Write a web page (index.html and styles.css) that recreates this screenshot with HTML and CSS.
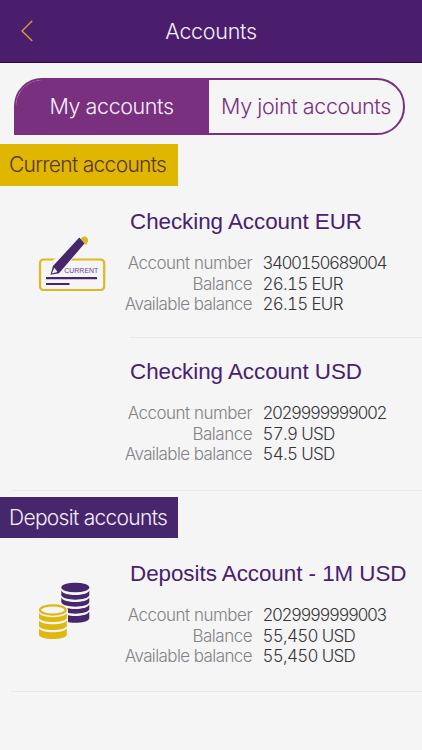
FILE: index.html
```html
<!DOCTYPE html>
<html lang="en">
<head>
<meta charset="utf-8">
<title>Accounts</title>
<link rel="stylesheet" href="styles.css">
</head>
<body>
<header class="bar">
  <svg class="back" viewBox="0 0 14 24" width="14" height="24"><path d="M12.3 1.8 2 12l10.3 10"/></svg>
  <h1 class="heading">Accounts</h1>
</header>
<nav class="tabs">
  <a class="tab active">My accounts</a>
  <a class="tab">My joint accounts</a>
</nav>
<section class="group">
  <h2 class="band gold">Current accounts</h2>
  <article class="account">
    <svg class="icon" viewBox="30 228 84 70" width="84" height="70">
      <rect x="40" y="259.5" width="64.2" height="30.5" rx="3.5" fill="none" stroke="#dfb722" stroke-width="2.2"/>
      <path d="M49 264 58 256h17l-9 10-14 12z" fill="#f5f5f5"/>
      <path d="M80.500 239.500q1.500-3.500 4.500-3 3.500 1 3 5l-2 3.500z" fill="#dfb722"/>
      <path d="M79.300 237.500 84.500 243.500 59 273.300 50.500 274.700 53 266z" fill="#46266c"/>
      <path d="m54.300 267.700 3.200 4.200-5.600 1.500z" fill="#f5f5f5"/>
      <path d="M46 278.200h51M46 284h23.500" stroke="#46266c" stroke-width="2.200"/>
      <text class="cheque" x="64.300" y="273.400" textLength="34" lengthAdjust="spacingAndGlyphs">CURRENT</text>
    </svg>
    <div class="info">
      <h3 class="name">Checking Account EUR</h3>
      <dl class="facts">
        <dt>Account number</dt><dd class="number">3400150689004</dd>
        <dt>Balance</dt><dd>26.15 EUR</dd>
        <dt class="tight">Available balance</dt><dd>26.15 EUR</dd>
      </dl>
    </div>
  </article>
  <article class="account last">
    <div class="info ruled">
      <h3 class="name">Checking Account USD</h3>
      <dl class="facts">
        <dt>Account number</dt><dd class="number">2029999999002</dd>
        <dt>Balance</dt><dd>57.9 USD</dd>
        <dt class="tight">Available balance</dt><dd>54.5 USD</dd>
      </dl>
    </div>
  </article>
</section>
<section class="group second">
  <h2 class="band purple">Deposit accounts</h2>
  <article class="account last">
    <svg class="icon" viewBox="30 575 84 70" width="84" height="70">
      <g fill="#46266c">
        <ellipse cx="75.300" cy="587.500" rx="14" ry="4.800"/>
        <path d="M61.300 590.500c2 6 26 6 28 0v4.800c-2 5.800-26 5.800-28 0z"/>
        <path d="M61.300 597.500c2 6 26 6 28 0v4.800c-2 5.800-26 5.800-28 0z"/>
        <path d="M61.300 604.500c2 6 26 6 28 0v4.800c-2 5.800-26 5.800-28 0z"/>
        <path d="M61.300 611.500c2 6 26 6 28 0v7c-2 5.800-26 5.800-28 0z"/>
      </g>
      <path d="M37.500 610c0-8 30.500-8 30.500 0v29h-30.500z" fill="#f5f5f5"/>
      <ellipse cx="52.900" cy="610" rx="12.900" ry="4.600" fill="none" stroke="#dfb70e" stroke-width="2.200"/>
      <g fill="#dfb70e">
        <path d="M39 612.800c2 5.800 25.800 5.800 27.800 0v5.200c-2 5.400-25.800 5.400-27.800 0z"/>
        <path d="M39 620.300c2 5.400 25.800 5.400 27.800 0v5.600c-2 5.400-25.800 5.400-27.800 0z"/>
        <path d="M39 628.200c2 5.400 25.800 5.400 27.800 0v6.800c-2 5.400-25.800 5.400-27.800 0z"/>
      </g>
    </svg>
    <div class="info">
      <h3 class="name">Deposits Account - 1M USD</h3>
      <dl class="facts">
        <dt>Account number</dt><dd class="number">2029999999003</dd>
        <dt>Balance</dt><dd>55,450 USD</dd>
        <dt class="tight">Available balance</dt><dd>55,450 USD</dd>
      </dl>
    </div>
  </article>
</section>
</body>
</html>
```

FILE: styles.css
```css
* { box-sizing: border-box; margin: 0; padding: 0; }
html, body { height: 750px; overflow: hidden; }
body {
  background: #f5f5f5;
  font-family: Inter, "Liberation Sans", sans-serif;
  font-weight: 300;
}
.bar {
  display: grid;
  grid-template-columns: 60px 1fr 60px;
  align-items: center;
  height: 63px;
  background: #4b1e6d;
  border-bottom: 1px solid #220a45;
}
.back { margin-left: 20px; fill: none; stroke: #dba52c; stroke-width: 1.3; }
.heading {
  font-size: 21.5px;
  font-weight: 300;
  color: #f7effb;
  text-align: center;
  letter-spacing: -0.3px;
}
.tabs {
  display: flex;
  width: 391px;
  height: 57px;
  margin: 15px 0 0 14px;
  border: 2px solid #78307f;
  border-radius: 28px 28px 28px 0;
  overflow: hidden;
}
.tab {
  flex: 1;
  display: flex;
  align-items: center;
  justify-content: center;
  padding-bottom: 1px;
  font-size: 21.5px;
  letter-spacing: -0.4px;
  white-space: nowrap;
  color: #78307f;
}
.tab.active { flex: 0 0 193px; padding-right: 2px; background: #78307f; color: #fbeffc; }
.group { margin-top: 9px; }
.group.second { margin-top: 6px; }
.band {
  width: 178px;
  height: 42px;
  padding-left: 9px;
  font-size: 21px;
  font-weight: 300;
  line-height: 42px;
  letter-spacing: -0.7px;
  white-space: nowrap;
}
.gold { background: #dfb700; color: #5c3434; }
.purple { height: 41px; background: #46266c; color: #f5effa; }
.account {
  display: grid;
  grid-template-columns: 84px 1fr;
  align-items: start;
  height: 151px;
  margin-left: 11px;
  padding: 23px 0 0 19px;
}
.last { height: 154px; border-bottom: 1px solid #e9e9ea; }
.icon { margin-top: 19px; }
.second .icon { margin-top: 14px; }
.info { grid-column: 2; margin-left: 16px; }
.account:has(.ruled) { padding-top: 0; }
.ruled { border-top: 1px solid #e9e9ea; padding-top: 21px; }
.name {
  font-family: "Liberation Sans", sans-serif;
  font-size: 22.400px;
  font-weight: 400;
  line-height: 26px;
  letter-spacing: -0.04px;
  color: #482070;
  white-space: nowrap;
}
.facts {
  display: grid;
  grid-template-columns: 128px 1fr;
  column-gap: 10.500px;
  margin: 18px 0 0 -6px;
  font-size: 17px;
  line-height: 20.700px;
  white-space: nowrap;
}
.facts dt { text-align: right; color: #828286; letter-spacing: -0.5px; }
.facts .tight { letter-spacing: -0.6px; }
.facts dd { color: #343437; letter-spacing: -0.7px; font-variant-numeric: tabular-nums; }
.facts .number { letter-spacing: -1.500px; }
.cheque { font-family: "Liberation Sans", sans-serif; font-size: 7.800px; font-weight: 400; fill: #68448b; }
```
